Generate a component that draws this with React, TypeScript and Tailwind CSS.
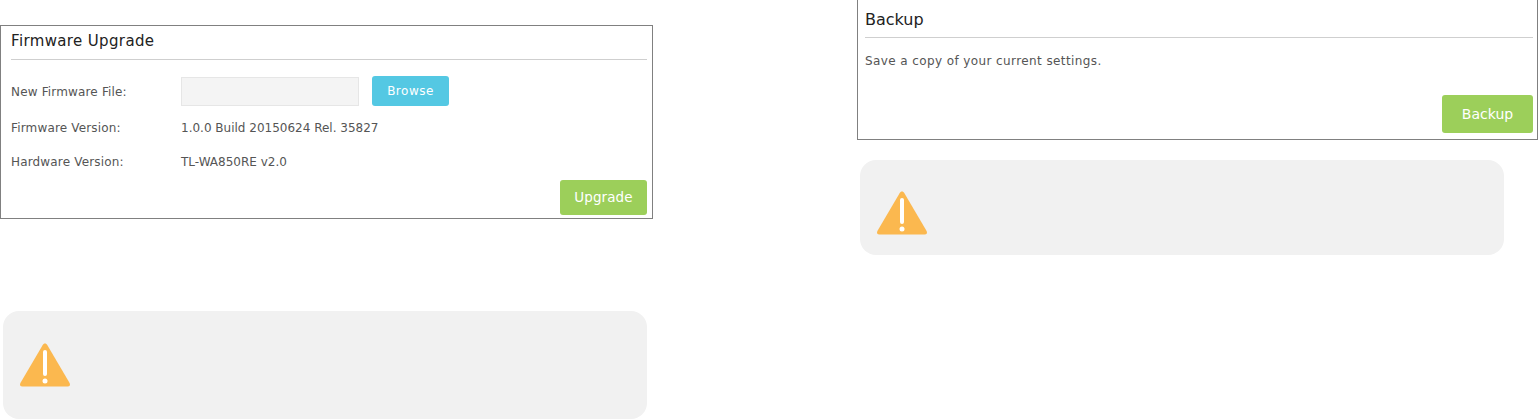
function WarningIcon() {
  return (
    <svg width="52" height="46" viewBox="0 0 52 46">
      <path d="M26 1.5 C27 1.5 27.8 2.2 28.4 3.2 L50.6 41 C51.6 43 50.8 44.5 48.6 44.5 L3.4 44.5 C1.2 44.5 .4 43 1.4 41 L23.6 3.2 C24.2 2.2 25 1.5 26 1.5 Z" fill="#fbb84f" />
      <rect x="24" y="8" width="4" height="26" rx="2" fill="#fff" />
      <circle cx="26" cy="39" r="2.5" fill="#fff" />
    </svg>
  );
}

function Field({ label, value }: { label: string; value: string }) {
  return (
    <div className="flex h-[34px] items-center text-[12px] text-[#555]">
      <span className="w-[170px] tracking-[0.16px]">{label}</span>
      <span>{value}</span>
    </div>
  );
}

export default function App() {
  return (
    <div className="flex h-[419px] w-[1538px] overflow-hidden bg-white font-['DejaVu_Sans',sans-serif]">
      <div className="flex w-[653px] flex-col pt-[25px]">
        <div className="flex h-[194px] flex-col border border-[#808080] pl-[10px] pr-[5px]">
          <div className="flex h-[34px] items-center border-b border-[#cfcfcf] pb-[3px] text-[15px] tracking-[0.36px] text-[#222]">Firmware Upgrade</div>
          <div className="mt-[16px] flex h-[31px] items-center text-[12px] tracking-[0.16px] text-[#555]">
            <span className="w-[170px]">New Firmware File:</span>
            <div className="h-[29px] w-[178px] border border-[#e6e6e6] bg-[#f4f4f4]" />
            <button className="mb-[1px] ml-[13px] h-[30px] w-[77px] rounded-[3px] bg-[#54c8e3] text-[12px] tracking-[0.5px] text-white">Browse</button>
          </div>
          <div className="mt-[4px]">
            <Field label="Firmware Version:" value="1.0.0 Build 20150624 Rel. 35827" />
            <Field label="Hardware Version:" value="TL-WA850RE v2.0" />
          </div>
          <div className="mt-[1px] flex justify-end">
            <button className="h-[35px] w-[87px] rounded-[3px] bg-[#9ccf5a] text-[13.5px] tracking-[0.1px] text-white">Upgrade</button>
          </div>
        </div>
        <div className="mt-[92px] ml-[3px] flex h-[108px] w-[644px] items-center rounded-[16px] bg-[#f1f1f1] pl-[16px]">
          <WarningIcon />
        </div>
      </div>
      <div className="ml-[204px] flex w-[681px] flex-col">
        <div className="flex h-[140px] flex-col border border-t-0 border-[#808080] pl-[7px] pr-[4px]">
          <div className="flex h-[38px] items-center border-b border-[#cfcfcf] pt-[2px] text-[16px] text-[#222]">Backup</div>
          <div className="mt-[14px] text-[12px] tracking-[0.4px] text-[#555]">Save a copy of your current settings.</div>
          <div className="mt-auto mb-[6px] flex justify-end">
            <button className="h-[38px] w-[91px] rounded-[3px] bg-[#9ccf5a] text-[14px] text-white">Backup</button>
          </div>
        </div>
        <div className="mt-[20px] ml-[3px] flex h-[95px] w-[644px] items-center rounded-[16px] bg-[#f1f1f1] pl-[16px] pt-[11px]">
          <WarningIcon />
        </div>
      </div>
    </div>
  );
}
